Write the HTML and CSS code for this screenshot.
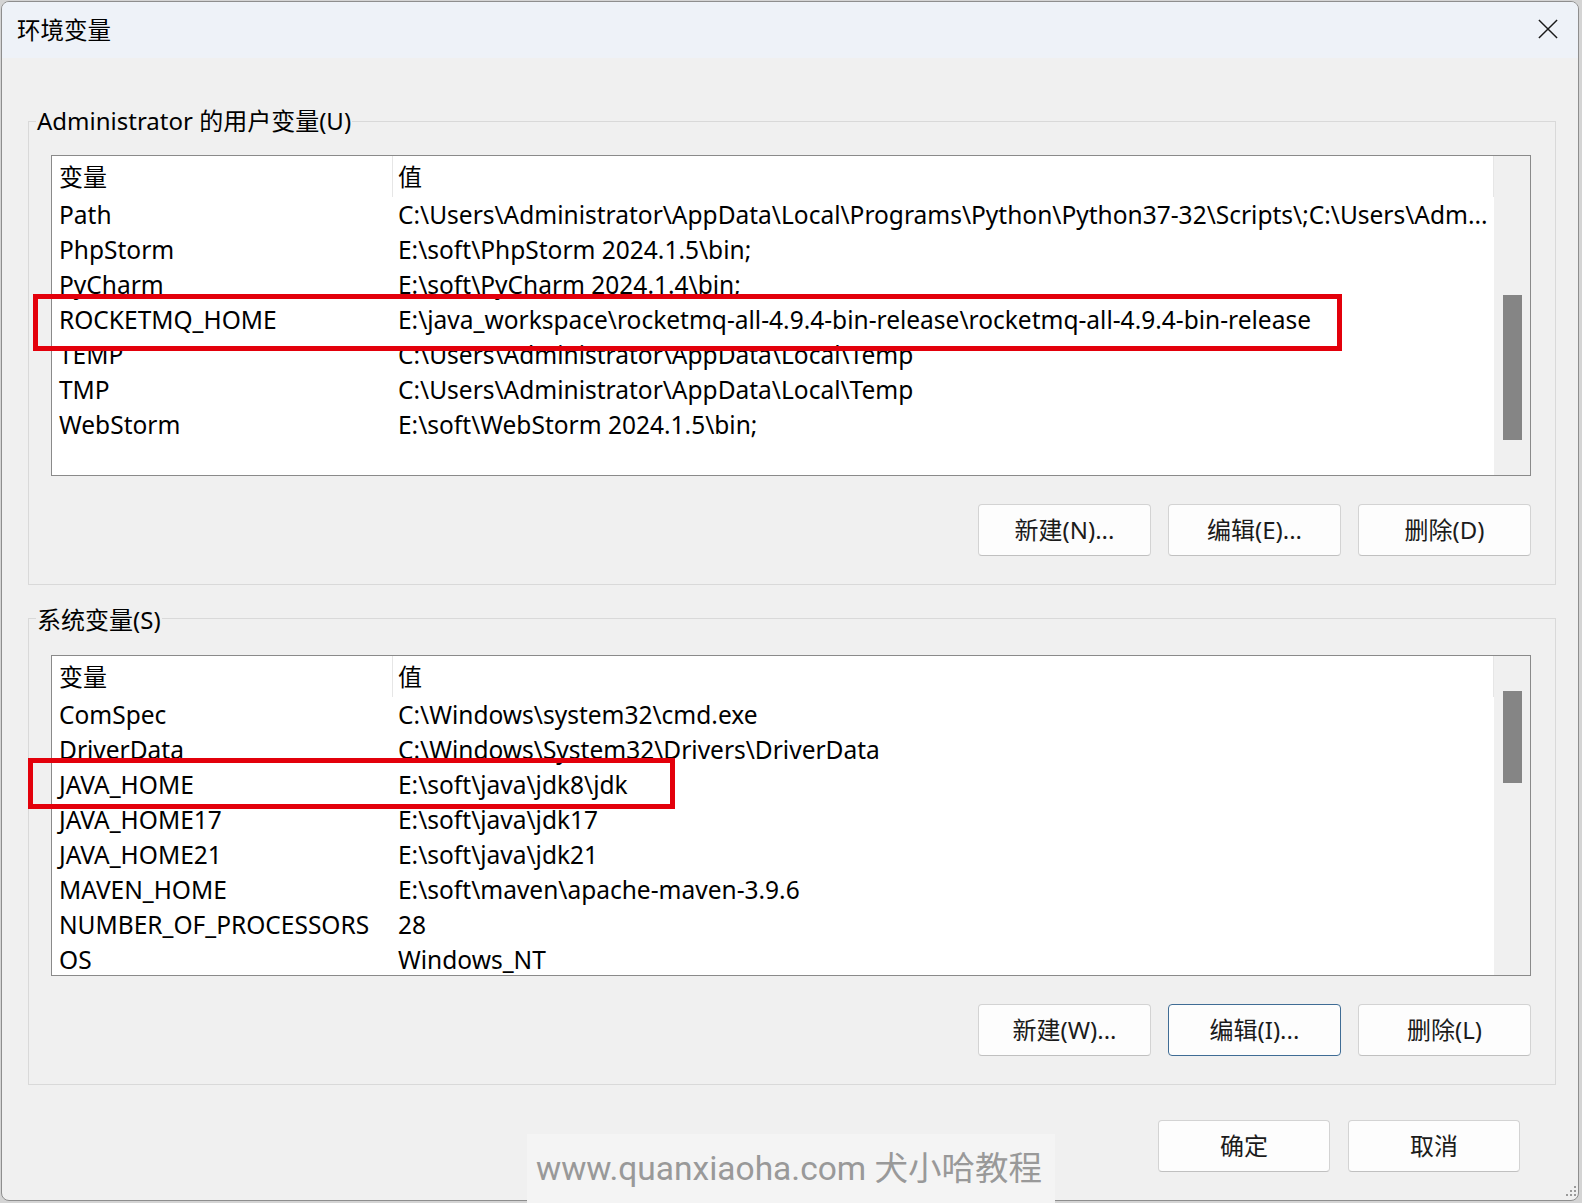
FILE: index.html
```html
<!DOCTYPE html>
<html lang="zh-CN">
<head>
<meta charset="utf-8">
<title>环境变量</title>
<link rel="stylesheet" href="styles.css">
</head>
<body>
<div class="window">
  <div class="titlebar">
    <span class="title">环境变量</span>
    <svg class="close" width="22" height="22" viewBox="0 0 22 22"><path d="M1 1 L21 21 M21 1 L1 21" stroke="#1a1a1a" stroke-width="1.6" fill="none"/></svg>
  </div>
  <div class="content">
    <div class="group group-user">
      <div class="group-title">Administrator 的用户变量(U)</div>
      <div class="list">
        <div class="rows">
          <div class="row head"><span class="name">变量</span><span class="val">值</span><span class="end"></span></div>
          <div class="row"><span class="name">Path</span><span class="val">C:\Users\Administrator\AppData\Local\Programs\Python\Python37-32\Scripts\;C:\Users\Adm...</span></div>
          <div class="row"><span class="name">PhpStorm</span><span class="val">E:\soft\PhpStorm 2024.1.5\bin;</span></div>
          <div class="row"><span class="name">PyCharm</span><span class="val">E:\soft\PyCharm 2024.1.4\bin;</span></div>
          <div class="row"><span class="name">ROCKETMQ_HOME</span><span class="val">E:\java_workspace\rocketmq-all-4.9.4-bin-release\rocketmq-all-4.9.4-bin-release</span></div>
          <div class="row"><span class="name">TEMP</span><span class="val">C:\Users\Administrator\AppData\Local\Temp</span></div>
          <div class="row"><span class="name">TMP</span><span class="val">C:\Users\Administrator\AppData\Local\Temp</span></div>
          <div class="row"><span class="name">WebStorm</span><span class="val">E:\soft\WebStorm 2024.1.5\bin;</span></div>
        </div>
        <div class="scroll"><div class="thumb thumb-user"></div></div>
      </div>
      <div class="btnrow">
        <button class="btn">新建(N)...</button>
        <button class="btn">编辑(E)...</button>
        <button class="btn">删除(D)</button>
      </div>
    </div>
    <div class="group group-sys">
      <div class="group-title">系统变量(S)</div>
      <div class="list">
        <div class="rows">
          <div class="row head"><span class="name">变量</span><span class="val">值</span><span class="end"></span></div>
          <div class="row"><span class="name">ComSpec</span><span class="val">C:\Windows\system32\cmd.exe</span></div>
          <div class="row"><span class="name">DriverData</span><span class="val">C:\Windows\System32\Drivers\DriverData</span></div>
          <div class="row"><span class="name">JAVA_HOME</span><span class="val">E:\soft\java\jdk8\jdk</span></div>
          <div class="row"><span class="name">JAVA_HOME17</span><span class="val">E:\soft\java\jdk17</span></div>
          <div class="row"><span class="name">JAVA_HOME21</span><span class="val">E:\soft\java\jdk21</span></div>
          <div class="row"><span class="name">MAVEN_HOME</span><span class="val">E:\soft\maven\apache-maven-3.9.6</span></div>
          <div class="row"><span class="name">NUMBER_OF_PROCESSORS</span><span class="val">28</span></div>
          <div class="row"><span class="name">OS</span><span class="val">Windows_NT</span></div>
        </div>
        <div class="scroll"><div class="thumb thumb-sys"></div></div>
      </div>
      <div class="btnrow">
        <button class="btn">新建(W)...</button>
        <button class="btn btn-focus">编辑(I)...</button>
        <button class="btn">删除(L)</button>
      </div>
    </div>
    <div class="footer">
      <button class="btn">确定</button>
      <button class="btn">取消</button>
    </div>
  </div>
</div>
<div class="mark mark-rocket"></div>
<div class="mark mark-java"></div>
<div class="watermark">www.quanxiaoha.com 犬小哈教程</div>
<svg class="grip" width="12" height="12" viewBox="0 0 12 12" fill="#9a9a9a">
  <rect x="9" y="1" width="2" height="2"/>
  <rect x="5" y="5" width="2" height="2"/><rect x="9" y="5" width="2" height="2"/>
  <rect x="1" y="9" width="2" height="2"/><rect x="5" y="9" width="2" height="2"/><rect x="9" y="9" width="2" height="2"/>
</svg>
</body>
</html>
```
FILE: styles.css
```css
* { box-sizing: border-box; }
html, body { margin: 0; padding: 0; }
body {
  width: 1582px;
  height: 1203px;
  overflow: hidden;
  position: relative;
  background: #d4d4d4;
  font-family: "Noto Sans", "Noto Sans CJK SC", sans-serif;
  font-size: 24px;
  color: #000;
}
.window {
  margin: 1px 0 0 1px;
  width: 1578px;
  height: 1200px;
  border: 1px solid #8e8e8e;
  border-radius: 8px;
  background: #f0f0f0;
  overflow: hidden;
}
.titlebar {
  height: 56px;
  background: #eef2f8;
  display: flex;
  align-items: center;
  justify-content: space-between;
  padding: 0 20px 3px 15px;
}
.title { font-size: 23.5px; color: #000; }
.close { display: block; width: 20px; height: 20px; }
.content { padding: 0 22px 0 26px; }
.group {
  border: 1px solid #d9d9d9;
  margin-top: 63px;
  padding: 0 24px 28px 22px;
}
.group-sys { margin-top: 33px; }
.group-title {
  width: fit-content;
  margin: -16px 0 0 -15px;
  padding: 0 1px;
  background: #f0f0f0;
  line-height: 30px;
  white-space: nowrap;
}
.group-sys .group-title { margin-top: -14px; }
.list {
  margin-top: 19px;
  height: 321px;
  border: 1px solid #8a8a8a;
  background: #fff;
  display: flex;
}
.group-sys .list { margin-top: 20px; }
.rows { flex: 1; overflow: hidden; min-width: 0; font-size: 24.5px; }
.row {
  display: flex;
  height: 35px;
  line-height: 35px;
  white-space: nowrap;
}
.row.head { height: 41px; line-height: 41px; font-size: 24px; }
.name { width: 340px; flex: none; padding-left: 7px; overflow: hidden; }
.val { flex: 1; padding-left: 6px; overflow: hidden; min-width: 0; }
.head .val { border-left: 1px solid #e6e6e6; padding-left: 5px; }
.head .end { width: 1px; flex: none; background: #e6e6e6; }
.scroll {
  width: 36px;
  flex: none;
  background: #f0f0f0;
  padding-left: 9px;
}
.thumb { width: 19px; background: #858585; }
.thumb-user { margin-top: 139px; height: 145px; }
.thumb-sys { margin-top: 35px; height: 92px; }
.btnrow {
  display: flex;
  justify-content: flex-end;
  gap: 17px;
  margin-top: 28px;
}
.btn {
  width: 173px;
  height: 52px;
  background: #fdfdfd;
  border: 1px solid #d3d3d3;
  border-bottom-color: #c0c0c0;
  border-radius: 4px;
  font-family: "Noto Sans", "Noto Sans CJK SC", sans-serif;
  font-size: 24px;
  color: #1b1b1b;
  padding: 0;
  line-height: 48px;
}
.btn-focus { border-color: #3f6c95; }
.footer {
  display: flex;
  justify-content: flex-end;
  gap: 18px;
  margin-top: 35px;
  padding-right: 36px;
}
.footer .btn { width: 172px; }
.mark {
  position: absolute;
  border: 5px solid #e3000b;
}
.mark-rocket { left: 33px; top: 294px; width: 1309px; height: 57px; }
.mark-java { left: 28px; top: 758px; width: 647px; height: 51px; }
.watermark {
  position: absolute;
  left: 527px;
  top: 1134px;
  width: 528px;
  height: 69px;
  background: #f4f4f4;
  color: #999;
  font-family: Roboto, "Noto Sans CJK SC", sans-serif;
  font-size: 33.5px;
  line-height: 50px;
  padding: 10px 0 0 9px;
  white-space: nowrap;
}
.grip { position: absolute; left: 1565px; top: 1185px; }
```
